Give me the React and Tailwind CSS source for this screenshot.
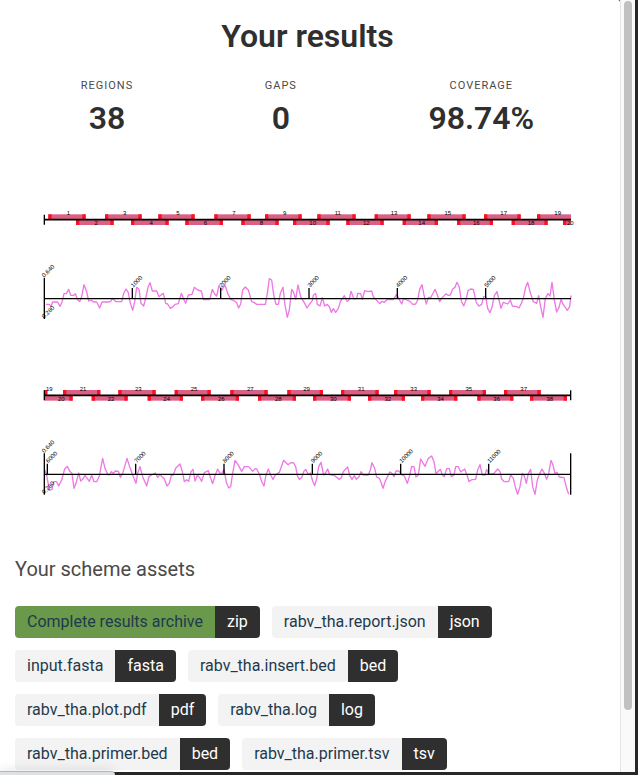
import React from "react";

const stats = [
  { label: "Regions", value: "38" },
  { label: "Gaps", value: "0" },
  { label: "Coverage", value: "98.74%" },
];

const assets = [
  { name: "Complete results archive", type: "zip", primary: true },
  { name: "rabv_tha.report.json", type: "json" },
  { name: "input.fasta", type: "fasta" },
  { name: "rabv_tha.insert.bed", type: "bed" },
  { name: "rabv_tha.plot.pdf", type: "pdf" },
  { name: "rabv_tha.log", type: "log" },
  { name: "rabv_tha.primer.bed", type: "bed" },
  { name: "rabv_tha.primer.tsv", type: "tsv" },
];

// Regions are [number, start, end, label centre]; odd numbers sit above the axis.
const firstHalf = {
  title: "Regions 1 to 20",
  axis: 59,
  base: 296,
  closed: false,
  regions: [
    [1, 55, 167], [2, 138, 251], [3, 225, 335], [4, 303, 416], [5, 385, 494],
    [6, 466, 579], [7, 553, 662], [8, 634, 746], [9, 705, 815], [10, 789, 899],
    [11, 862, 977], [12, 949, 1061], [13, 1034, 1142], [14, 1118, 1224],
    [15, 1192, 1307], [16, 1281, 1389], [17, 1362, 1472], [18, 1445, 1553],
    [19, 1521, 1623, 1583], [20, 1599, 1623, 1621],
  ],
  ticks: [[307, "1000"], [572, "2000"], [837, "3000"], [1102, "4000"], [1367, "5000"]],
  traces: [
    [0, "48,313 57,313 63,319 68,306 83,306 90,319 96,306 102,281 109,281 116,268 122,286 131,286 136,281 142,298 149,305 155,290 162,254 170,275 176,303 184,300 190,306 200,306 209,324 216,306 235,306 242,304 248,295 258,305 275,305 281,280 288,267 295,278 300,306 308,331 314,305 320,262 327,268 333,310 341,318 347,295 354,262 360,248 367,273 380,273 387,290 393,285 400,280 407,310 413,312 421,325 429,320 435,313 445,311 454,280 460,295 467,310 475,285 486,283 493,262 503,270 514,273 520,299 539,299"],
    [540, "-1,299 7,268 14,282 20,288 27,257 36,270 45,255 53,280 62,298 72,302 80,308 86,324 92,312 98,270 106,261 115,270 125,305 133,308 140,313 166,313 172,280 178,236 185,240 191,285 198,313 205,313 211,280 219,262 225,315 232,352 238,330 245,268 251,278 257,298 264,255 272,290 284,310 291,324 298,313 307,302 310,285 317,281 322,313 330,318 337,293 344,318 351,313 358,320 364,337 370,326 377,337 385,325 392,303 403,287 411,304 417,300 423,274 432,297 440,295 443,280 452,281 457,298 464,272 475,275 485,273 490,290 497,298 509,311 516,304 523,307 532,298 540,299"],
    [1080, "0,299 10,299 20,283 35,312 41,295 50,300 60,304 68,313 77,312 83,300 89,268 96,254 102,285 109,312 115,292 122,293 128,282 135,268 142,285 149,305 155,295 168,281 174,286 181,285 188,267 195,262 201,247 208,262 214,303 221,318 228,300 234,272 242,267 250,268 259,308 267,318 275,313 281,290 287,290 293,325 300,338 306,322 313,287 321,275 327,300 333,325 340,307 353,312 361,300 367,318 380,320 387,324 394,310 400,295 407,262 413,247 421,278 430,305 440,310 446,287 452,320 459,352 466,295 474,281 480,288 486,247 493,300 500,336 507,322 513,298 520,314 532,331 539,320 543,286"],
  ],
};

const secondHalf = {
  title: "Regions 19 to 38",
  axis: 61,
  base: 298,
  closed: true,
  regions: [
    [19, 43, 52, 58], [20, 43, 128, 94], [21, 99, 211], [22, 185, 293], [23, 265, 377],
    [24, 353, 459], [25, 434, 542], [26, 513, 627], [27, 601, 713], [28, 684, 798],
    [29, 772, 879], [30, 849, 963], [31, 933, 1046], [32, 1014, 1125], [33, 1092, 1202],
    [34, 1173, 1282], [35, 1257, 1368], [36, 1342, 1450], [37, 1422, 1532],
    [38, 1500, 1611],
  ],
  ticks: [
    [52, "6000"], [317, "7000"], [582, "8000"], [847, "9000"], [1112, "10000"], [1376, "11000"],
  ],
  traces: [
    [0, "44,285 50,300 58,346 66,343 71,320 80,320 86,333 95,315 104,282 112,274 119,288 126,296 132,340 138,325 146,294 152,318 158,313 165,301 178,319 185,301 192,320 200,320 208,303 218,250 225,280 233,298 238,300 244,290 250,295 256,288 265,289 271,307 278,295 284,275 291,250 299,275 310,305 318,325 323,295 330,275 338,305 350,333 357,305 364,300 376,294 383,307 390,299 403,312 411,333 418,325 424,301 430,300 437,280 450,267 457,290 463,320 470,314 476,319 483,290 489,283 495,318 502,301 509,308 515,319 523,293 535,287 542,310"],
    [540, "2,310 8,326 15,302 23,282 30,295 36,295 42,283 49,322 56,339 62,335 68,295 75,256 84,269 95,289 103,275 116,275 128,289 135,281 140,282 148,297 155,320 162,333 168,300 175,282 182,300 189,313 196,300 208,292 214,275 221,256 234,269 242,263 251,264 257,275 262,302 268,313 275,308 281,290 287,283 294,297 301,294 308,318 314,332 320,312 326,275 333,262 341,300 346,295 353,282 359,299 374,302 387,313 394,308 400,290 413,276 419,302 426,313 433,302 439,313 447,305 453,290 460,300 475,300 481,285 486,263 494,280 500,306 508,310 513,322 519,340 526,318 540,290"],
    [1080, "0,290 7,297 12,305 18,288 27,288 34,299 43,303 52,325 58,305 65,274 72,275 78,306 85,300 92,252 105,274 115,250 125,243 132,260 138,296 151,283 157,300 163,305 170,281 178,281 184,305 192,300 197,275 205,275 212,291 224,282 231,300 237,320 245,314 257,313 263,285 270,269 277,300 285,300 290,283 296,298 312,295 323,282 330,290 335,312 343,320 356,320 362,300 370,310 377,340 383,358 390,335 397,295 403,303 409,325 415,295 422,283 428,335 435,358 442,315 448,298 456,282 463,295 470,313 476,296 483,256 489,270 495,296 501,292 508,306 522,308 530,340 536,358"],
  ],
};

const LEFT = 43;
const RIGHT = 1623;

function Region({ region, axis }) {
  const [number, start, end] = region;
  const above = number % 2 === 1;
  const y = above ? axis - 16 : axis + 1;
  const primer = 10;
  return (
    <g>
      <rect x={start} y={y} width={end - start} height="15" fill="#db6084" />
      {start > LEFT && <rect x={start} y={y} width={primer} height="15" fill="#ff0d20" />}
      {end < RIGHT && (
        <rect x={Math.max(start, end - primer)} y={y} width={Math.min(primer, end - start)} height="15" fill="#ff0d20" />
      )}
    </g>
  );
}

function Track({ data }) {
  const { axis, base } = data;
  return (
    <svg
      role="img"
      aria-label={data.title}
      viewBox="-45 0 1755 390"
      className="block w-full overflow-visible font-['Liberation_Sans',Arial,sans-serif] text-[18px]"
    >
      {data.regions.map((r) => (
        <Region key={r[0]} region={r} axis={axis} />
      ))}
      <g stroke="#000" strokeWidth="5">
        <path d={`M${LEFT} ${axis}H${RIGHT}`} />
        <path d={`M${LEFT} ${axis - 15}v30`} strokeWidth="4" />
        {data.closed && <path d={`M${RIGHT - 1} ${axis - 15}v30`} strokeWidth="4" />}
      </g>
      {data.regions.map(([number, start, end, centre]) => (
        <text
          key={number}
          x={centre || (start + end) / 2 + 4}
          y={number % 2 === 1 ? axis - 14 : axis + 16}
          textAnchor="middle"
        >
          {number}
        </text>
      ))}

      {data.traces.map(([offset, points]) => (
        <polyline
          key={offset}
          points={points}
          transform={`translate(${offset} 0)`}
          fill="none"
          stroke="#ee78e6"
          strokeWidth="4"
          strokeLinejoin="round"
        />
      ))}
      <g stroke="#000" strokeWidth="4">
        <path d={`M${LEFT - 1} ${base}H${RIGHT}`} />
        <path d={`M${LEFT} ${base - 63}v124`} />
        {data.closed && <path d={`M${RIGHT - 1} ${base - 63}v124`} />}
        {data.ticks.map(([x]) => (
          <path key={x} d={`M${x} ${base}v-32`} />
        ))}
      </g>
      {data.ticks.map(([x, label]) => (
        <text key={label} transform={`translate(${x + 3} ${base - 33}) rotate(-45)`}>
          {label}
        </text>
      ))}
      <text transform={`translate(${LEFT} ${base - 63}) rotate(-45)`}>0.640</text>
      <text transform={`translate(${LEFT} ${base + 60}) rotate(-45)`}>0.280</text>
    </svg>
  );
}

function Asset({ asset }) {
  const nameTone = asset.primary ? "bg-[#6a994b]" : "bg-[#f3f3f3]";
  return (
    <a href="#download" className="flex h-8 overflow-hidden rounded text-base leading-8">
      <span className={`px-3 text-[#1f3a4d] ${nameTone}`}>{asset.name}</span>
      <span className="bg-[#2f2f2f] px-3 text-white">{asset.type}</span>
    </a>
  );
}

export default function App() {
  return (
    <div className="relative flex h-screen overflow-hidden bg-[#272727] pr-[3px] pb-[3px] font-[Roboto,sans-serif]">
      <main className="min-w-0 flex-1 overflow-hidden rounded-tr-xs bg-white pt-[18px] pr-5 pl-[15px]">
        <h1 className="text-center text-[32px] leading-9 font-semibold text-[#2f2f2f]">Your results</h1>

        <dl className="mt-6 flex">
          {stats.map((s) => (
            <div key={s.label} className="flex grow flex-col items-center">
              <dt className="text-[11px] leading-4 tracking-[1px] text-[#4a4a4a] uppercase">{s.label}</dt>
              <dd className="mt-1.5 text-[32px] leading-9 font-semibold text-[#2f2f2f]">{s.value}</dd>
            </div>
          ))}
        </dl>

        <section aria-label="Scheme plot" className="mt-16 flex flex-col gap-[45px]">
          <Track data={firstHalf} />
          <Track data={secondHalf} />
        </section>

        <section className="mt-[52px]">
          <h2 className="text-xl leading-6 text-[#4a4a4a]">Your scheme assets</h2>
          <div className="mt-[25px] flex flex-wrap gap-3">
            {assets.map((a) => (
              <Asset key={a.name} asset={a} />
            ))}
          </div>
        </section>
      </main>

      <div className="w-[15px] shrink-0 border-l border-[#e4e4e4] bg-[#fafafa] pt-px pl-[3px]">
        <div className="h-[92%] w-2 rounded-full bg-[#c1c1c1]" />
      </div>

      <div className="absolute bottom-0 left-0 h-1 w-[115px] rounded-tr border-t border-[#b4b6b8] bg-[#dee1e4] shadow-[0_0_12px_rgba(0,0,0,0.2)]" />
    </div>
  );
}
